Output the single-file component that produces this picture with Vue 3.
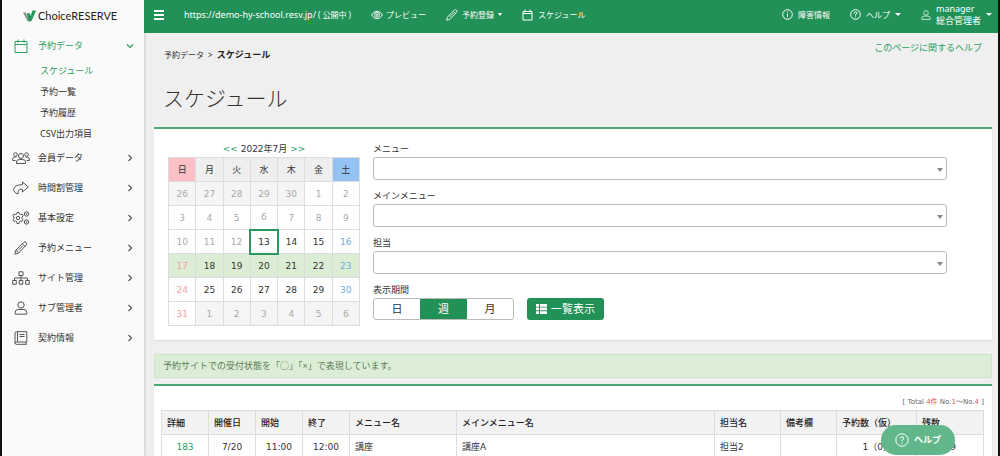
<script setup>
import { ref } from 'vue'

const subItems = ['スケジュール', '予約一覧', '予約履歴', 'CSV出力項目']
const navItems = [
  { label: '会員データ', icon: 'users' },
  { label: '時間割管理', icon: 'share' },
  { label: '基本設定', icon: 'gears' },
  { label: '予約メニュー', icon: 'pencil' },
  { label: 'サイト管理', icon: 'sitemap' },
  { label: 'サブ管理者', icon: 'user' },
  { label: '契約情報', icon: 'book' }
]

const weekdays = ['日', '月', '火', '水', '木', '金', '土']
const day = (n, ...kinds) => ({ n, kinds })
const weeks = [
  [26, 27, 28, 29, 30].map((n) => day(n, 'muted', 'outside')).concat([1, 2].map((n) => day(n, 'muted'))),
  [3, 4, 5, 6, 7, 8, 9].map((n) => day(n, 'muted')),
  [day(10, 'muted'), day(11, 'muted'), day(12, 'muted'), day(13, 'today'), day(14), day(15), day(16, 'sat')],
  [day(17, 'sun'), day(18), day(19), day(20), day(21), day(22), day(23, 'sat')],
  [day(24, 'sun'), day(25), day(26), day(27), day(28), day(29), day(30, 'sat')],
  [day(31, 'sun')].concat([1, 2, 3, 4, 5, 6].map((n) => day(n, 'muted', 'outside')))
]
const selectedWeek = 3

const filters = [
  { id: 'menu', label: 'メニュー' },
  { id: 'main-menu', label: 'メインメニュー' },
  { id: 'staff', label: '担当' }
]
const periods = ['日', '週', '月']
const period = ref('週')

const columns = ['詳細', '開催日', '開始', '終了', 'メニュー名', 'メインメニュー名', '担当名', '備考欄', '予約数（仮）', '残数']
</script>

<template>
  <div class="shell">
    <aside class="sidebar">
      <a href="#" class="logo">
        <svg width="13" height="12" viewBox="0 0 13 12">
          <path d="M0 2.500h3l3 8.500H4.500z" fill="#8a8f8c" />
          <path d="M4 3.500l2.500-.500L7.500 6l2-5.500H13L9 10Q8 12 5.500 11.500z" fill="#229458" />
        </svg>
        <span>Choice<b>RESERVE</b></span>
      </a>
      <nav>
        <a href="#" class="nav-link open">
          <span class="nav-icon">
            <svg width="14" height="14" viewBox="0 0 14 14"><path d="M1 2.500h12v11H1zM1 5.500h12M4 .500v3M10 .500v3" /></svg>
          </span>
          <span class="nav-label">予約データ</span>
          <svg class="chev" width="8" height="8" viewBox="0 0 8 8"><path d="M1 2.500l3 3 3-3" /></svg>
        </a>
        <ul class="sub">
          <li v-for="(s, i) in subItems" :key="s"><a href="#" :class="{ current: i === 0 }">{{ s }}</a></li>
        </ul>
        <ul class="main-items">
          <li v-for="item in navItems" :key="item.label">
            <a href="#" class="nav-link">
              <span class="nav-icon">
                <svg v-if="item.icon === 'users'" width="18" height="14" viewBox="0 0 18 14">
                  <circle cx="9" cy="5" r="2.500" /><path d="M4.500 12.500v-1.500q0-2.500 3-2.500h3q3 0 3 2.500v1.500z" />
                  <circle cx="3.500" cy="3.500" r="1.800" /><circle cx="14.500" cy="3.500" r="1.800" />
                  <path d="M3.500 9.500H.700V8q0-2 2-2h1.800M14.500 9.500h2.800V8q0-2-2-2h-1.800" />
                </svg>
                <svg v-else-if="item.icon === 'share'" width="16" height="14" viewBox="0 0 16 14">
                  <path d="M9.500 1l5.800 4.900L9.500 11V8.300Q4.500 7.500 5 12.800Q.700 12 .700 8.300Q1 3.800 9.500 3.700z" />
                </svg>
                <svg v-else-if="item.icon === 'gears'" width="18" height="14" viewBox="0 0 18 14">
                  <path d="M5 1.500h2l.4 1.600 1.200.6 1.500-.7 1 1.700-1 1.300v1.500l1 1.300-1 1.700-1.500-.600-1.200.600L7 12.500H5l-.4-2-1.200-.600-1.500.600-1-1.700 1-1.300V6l-1-1.300 1-1.700 1.500.700 1.200-.6z" />
                  <circle cx="6" cy="7" r="1.700" />
                  <circle cx="14.500" cy="3" r="2.200" /><circle cx="14.500" cy="11" r="2.200" />
                  <circle cx="14.500" cy="3" r=".5" /><circle cx="14.500" cy="11" r=".5" />
                </svg>
                <svg v-else-if="item.icon === 'pencil'" width="14" height="14" viewBox="0 0 14 14">
                  <path d="M.8 13.200l1-4L9.700 1.400q1.300-1.200 2.500 0 1.200 1.200 0 2.500L4.700 12zM1.800 9.200L4.700 12M8.300 2.800l2.800 2.800M4 9.500l4.500-4.500" />
                </svg>
                <svg v-else-if="item.icon === 'sitemap'" width="18" height="14" viewBox="0 0 18 14">
                  <path d="M7 .8h4v3.700H7zM.7 9.500h3.600v3.700H.7zM7.200 9.500h3.600v3.700H7.200zM13.700 9.500h3.600v3.700h-3.600zM9 4.500v5M2.500 9.500V7h13v2.500" />
                </svg>
                <svg v-else-if="item.icon === 'user'" width="14" height="14" viewBox="0 0 14 14">
                  <circle cx="7" cy="4" r="3.200" /><path d="M1.200 13.200v-2q0-2.700 3-2.700h5.600q3 0 3 2.700v2z" />
                </svg>
                <svg v-else width="14" height="14" viewBox="0 0 14 14">
                  <path d="M12.800 11V.7H2.500Q1 .7 1 2.200v9.600q0 1.500 1.500 1.500h10.300M12.800 11H2.500Q1 11 1 12M12 11v2M3.500.7V11M5.500 3.500h5M5.500 5.500h5" />
                </svg>
              </span>
              <span class="nav-label">{{ item.label }}</span>
              <svg class="chev" width="8" height="8" viewBox="0 0 8 8"><path d="M2.500 1l3 3-3 3" /></svg>
            </a>
          </li>
        </ul>
      </nav>
    </aside>

    <div class="main">
      <header class="topbar">
        <button class="burger" aria-label="menu"><i></i><i></i><i></i></button>
        <a href="#" class="site">https://demo-hy-school.resv.jp/<span>( 公開中 )</span></a>
        <a href="#" class="preview">
          <svg width="12" height="10" viewBox="0 0 12 10"><path d="M.6 5Q3 1.200 6 1.200T11.400 5Q9 8.800 6 8.800T.6 5z" /><circle cx="6" cy="4.800" r="2.300" /><circle cx="6" cy="4.800" r=".7" /></svg>プレビュー</a>
        <a href="#" class="book">
          <svg width="12" height="12" viewBox="0 0 14 14"><path d="M.8 13.200l1-4L9.700 1.400q1.300-1.200 2.500 0 1.200 1.200 0 2.500L4.700 12zM8.300 2.800l2.800 2.800M4 9.500l4.500-4.500" /></svg>予約登録<i class="caret"></i></a>
        <a href="#" class="sched">
          <svg width="11" height="12" viewBox="0 0 11 12"><path d="M1 2.500h9v8.500H1zM1 4.500h9M3 .500v2M8 .500v2" /></svg>スケジュール</a>
        <div class="right">
          <a href="#">
            <svg width="11" height="11" viewBox="0 0 11 11"><circle cx="5.500" cy="5.500" r="4.800" /><path d="M5.500 2.500v1M5.500 4.700v3.500" /></svg>障害情報</a>
          <a href="#" class="help-link">
            <svg width="11" height="11" viewBox="0 0 11 11"><circle cx="5.500" cy="5.500" r="4.800" /><path d="M4 4.500Q4 3 5.500 3T7 4.300Q7 5 5.500 5.500v1M5.500 7.600v.9" /></svg>ヘルプ<i class="caret"></i></a>
          <a href="#" class="account">
            <svg width="10" height="12" viewBox="0 0 14 14"><circle cx="7" cy="4" r="3.200" /><path d="M1.200 13.200v-2q0-2.700 3-2.700h5.600q3 0 3 2.700v2z" /></svg>
            <span><span class="login">manager</span>総合管理者</span><i class="caret"></i></a>
        </div>
      </header>

      <div class="content">
        <div class="crumbs">
          <p>予約データ <span>&gt;</span> <b>スケジュール</b></p>
          <a href="#">このページに関するヘルプ</a>
        </div>
        <h1>スケジュール</h1>

        <section class="card search">
          <div class="calendar">
            <p class="month"><a href="#">&lt;&lt;</a> 2022年7月 <a href="#">&gt;&gt;</a></p>
            <table>
              <thead>
                <tr><th v-for="(w, i) in weekdays" :key="w" :class="{ 'sun-head': i === 0, 'sat-head': i === 6 }">{{ w }}</th></tr>
              </thead>
              <tbody>
                <tr v-for="(week, i) in weeks" :key="i" :class="{ selected: i === selectedWeek }">
                  <td v-for="d in week" :key="d.n" :class="d.kinds">{{ d.n }}</td>
                </tr>
              </tbody>
            </table>
          </div>
          <form class="filters" @submit.prevent>
            <div v-for="f in filters" :key="f.id" class="field">
              <label :for="f.id">{{ f.label }}</label>
              <div class="select-wrap"><select :id="f.id"><option></option></select></div>
            </div>
            <div class="period-label">表示期間</div>
            <div class="actions">
              <div class="segmented">
                <button v-for="p in periods" :key="p" type="button" :class="{ on: p === period }" @click="period = p">{{ p }}</button>
              </div>
              <button type="button" class="list-btn">
                <svg width="11" height="10" viewBox="0 0 11 10"><path d="M0 0h3v2.700H0zM4 0h7v2.700H4zM0 3.600h3v2.700H0zM4 3.600h7v2.700H4zM0 7.200h3V10H0zM4 7.200h7V10H4z" /></svg>一覧表示</button>
            </div>
          </form>
        </section>

        <p class="notice">予約サイトでの受付状態を「○」「×」で表現しています。</p>

        <section class="card results">
          <p class="total">[ Total <em>4件</em> No.<em>1</em>～No.<em>4</em> ]</p>
          <table>
            <colgroup><col v-for="(c, i) in columns" :key="c" :class="'c' + i" /></colgroup>
            <thead><tr><th v-for="c in columns" :key="c">{{ c }}</th></tr></thead>
            <tbody>
              <tr>
                <td class="num"><a href="#">183</a></td>
                <td class="num">7/20</td>
                <td class="num">11:00</td>
                <td class="num">12:00</td>
                <td>講座</td>
                <td>講座A</td>
                <td>担当2</td>
                <td></td>
                <td class="amount">1（0）</td>
                <td class="remain">9</td>
              </tr>
            </tbody>
          </table>
        </section>
      </div>
    </div>

    <button class="help-fab">
      <svg width="14" height="14" viewBox="0 0 14 14"><circle cx="7" cy="7" r="6.200" /><path d="M5.200 5.500Q5.200 3.800 7 3.800t1.800 1.500Q8.800 6.400 7 7.200v1M7 9.500v1.200" /></svg>ヘルプ</button>
  </div>
</template>

<style>
body {
  background: #efefef;
}
</style>

<style scoped>
* {
  box-sizing: border-box;
  margin: 0;
  padding: 0;
}
.shell {
  display: flex;
  height: 100vh;
  overflow: hidden;
  border: solid #111;
  border-width: 0 2px;
  background: #efefef;
  color: #333;
  font: 9px/14px "Noto Sans", "Noto Sans CJK JP", sans-serif;
}
a {
  color: inherit;
  text-decoration: none;
}
ul {
  list-style: none;
}
button {
  font: inherit;
  color: inherit;
  border: 0;
  background: none;
}
svg {
  fill: none;
  stroke: currentColor;
  flex: none;
}

/* sidebar */
.sidebar {
  width: 142px;
  flex: none;
  background: #fafafa;
  box-shadow: 1px 0 2px #ccc;
}
.logo {
  display: flex;
  align-items: center;
  height: 32px;
  padding-left: 21px;
  gap: 2px;
  color: #222;
  font: 11px/16px Lato, sans-serif;
}
.logo svg {
  stroke: none;
}
.logo b {
  font-weight: 400;
}
.nav-link {
  display: flex;
  align-items: center;
  height: 28px;
  padding: 0 10px 0 9px;
}
.open {
  color: #2a9f63;
}
.nav-icon {
  display: flex;
  justify-content: center;
  width: 19px;
  margin-right: 8px;
}
.nav-label {
  flex: 1;
}
.chev {
  stroke-width: 1.2;
}
.sub {
  padding-left: 38px;
  line-height: 21px;
}
.current {
  color: #2a9f63;
}
.main-items {
  display: flex;
  flex-direction: column;
  gap: 2px;
}
.main-items .nav-icon,
.main-items .chev {
  color: #555;
}

/* header */
.main {
  flex: 1;
  min-width: 0;
  display: flex;
  flex-direction: column;
}
.topbar {
  display: flex;
  align-items: center;
  height: 33px;
  flex: none;
  padding: 0 6px 4px 10px;
  background: #219157;
  color: #fff;
  font-size: 8px;
}
.topbar a {
  display: flex;
  align-items: center;
  white-space: nowrap;
}
.burger {
  display: grid;
  gap: 2px;
  width: 10px;
}
.burger i {
  height: 2px;
  background: #fff;
}
.topbar .site {
  margin-left: 20px;
  gap: 2px;
  font-size: 9px;
}
.site span {
  font-size: 8px;
}
.preview {
  margin-left: 20px;
  gap: 3px;
}
.book {
  margin-left: 20px;
  gap: 4px;
}
.sched {
  margin-left: 20px;
  gap: 5px;
}
.caret {
  border: solid transparent;
  border-width: 3px 3px 0;
  border-top-color: currentColor;
}
.book .caret {
  border-width: 3px 2px 0;
}
.right {
  display: flex;
  align-items: center;
  margin-left: auto;
  gap: 20px;
}
.right a {
  gap: 5px;
}
.topbar .account {
  font-size: 9px;
  line-height: 12px;
}
.login {
  display: block;
}

/* content */
.content {
  flex: 1;
  display: flex;
  flex-direction: column;
  padding: 8px 6px 0 10px;
}
.crumbs {
  display: flex;
  justify-content: space-between;
  padding: 0 10px;
}
.crumbs p {
  padding-top: 7px;
  font-size: 8px;
}
.crumbs span {
  margin: 0 2px;
}
.crumbs b {
  font-size: 9px;
  color: #222;
}
.crumbs a {
  color: #2a9f63;
}
h1 {
  margin: 21px 0 14px 9px;
  font-size: 21px;
  line-height: 30px;
  font-weight: 300;
}
.card {
  background: #fff;
  border-top: 2px solid #4aa877;
  box-shadow: 0 1px 1px #ddd;
}
.search {
  display: flex;
  gap: 13px;
  padding: 12px 45px 14px 14px;
}
.calendar {
  width: 192px;
  flex: none;
  font-family: "DejaVu Sans", "Noto Sans CJK JP", sans-serif;
}
.month {
  text-align: center;
  line-height: 16px;
}
.month a {
  color: #2a9f63;
}
table {
  width: 100%;
  border-collapse: collapse;
  table-layout: fixed;
}
.calendar th,
.calendar td {
  height: 24px;
  border: 1px solid #ddd;
  text-align: center;
  font-weight: 400;
}
.calendar th {
  background: #efefef;
}
.calendar .sun-head {
  background: #fdc0c5;
}
.calendar .sat-head {
  background: #94c2f3;
}
.muted {
  color: #aaa;
}
.outside {
  background: #f5f5f5;
}
.sun {
  color: #f0a0a0;
}
.sat {
  color: #6fabdf;
}
.calendar .today {
  border: 2px solid #2c9660;
}
.selected td {
  background: #dcedd5;
}
.filters {
  flex: 1;
}
.field {
  margin-bottom: 9px;
}
.field label,
.period-label {
  display: block;
  line-height: 14px;
}
.field label {
  margin-bottom: 1px;
}
.field:first-child {
  margin-top: 1px;
}
.select-wrap {
  position: relative;
}
.select-wrap::after {
  content: "";
  position: absolute;
  right: 4px;
  top: 11px;
  border: solid transparent;
  border-width: 4px 3px 0;
  border-top-color: #888;
}
select {
  display: block;
  width: 100%;
  height: 23px;
  appearance: none;
  background: #fff;
  border: 1px solid #bbb;
  border-radius: 3px;
}
.actions {
  display: flex;
  gap: 13px;
  margin-top: 1px;
  font-size: 11px;
}
.segmented {
  display: flex;
  border: 1px solid #bbb;
  border-radius: 3px;
  overflow: hidden;
}
.segmented button {
  width: 46px;
  height: 20px;
}
.segmented .on {
  width: 47px;
  background: #219157;
  color: #fff;
}
.list-btn {
  display: flex;
  align-items: center;
  gap: 4px;
  padding: 0 9px;
  border-radius: 3px;
  background: #219157;
  color: #fff;
}
.list-btn svg {
  fill: currentColor;
  stroke: none;
}
.notice {
  margin: 14px 0 6px;
  padding: 4px 8px;
  border: 1px solid #cfe3c6;
  background: #dcedd5;
  color: #5b7d5c;
  line-height: 14px;
}
.results {
  flex: 1;
  padding: 8px 8px 0 7px;
}
.total {
  text-align: right;
  line-height: 16px;
  font-family: "DejaVu Sans", "Noto Sans CJK JP", sans-serif;
  font-size: 7px;
  color: #666;
}
.total em {
  font-style: normal;
  color: #e05555;
}
.results th,
.results td {
  height: 24px;
  padding: 0 5px;
  border: 1px solid #ddd;
  text-align: left;
  white-space: nowrap;
}
.results td {
  font-family: "DejaVu Sans", "Noto Sans CJK JP", sans-serif;
}
.results th {
  background: #f2f2f2;
  font-weight: 500;
  color: #222;
}
.c0, .c1, .c2, .c3 { width: 47px; }
.c4 { width: 107px; }
.c6 { width: 66px; }
.c7 { width: 56px; }
.c8 { width: 80px; }
.c9 { width: 67px; }
.results .num {
  text-align: center;
}
.num a {
  color: #2a9f63;
}
.results .amount {
  padding-right: 24px;
  text-align: right;
}
.results .remain {
  padding-right: 27px;
  text-align: right;
}
.help-fab {
  position: absolute;
  right: 45px;
  bottom: 1px;
  display: flex;
  align-items: center;
  gap: 5px;
  height: 30px;
  padding: 0 14px;
  border-radius: 15px;
  background: #61b78a;
  color: #fff;
  font-size: 9px;
  font-weight: 700;
}
</style>
